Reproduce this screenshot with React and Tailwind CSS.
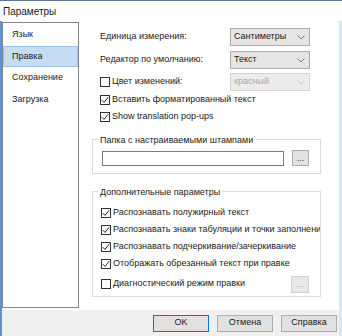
import React from "react";

const Check = ({ checked }) => (
  <span className="w-[10px] h-[10px] border border-[#333333] bg-white flex items-center justify-center shrink-0">
    {checked && (
      <svg width="8" height="8" viewBox="0 0 8 8">
        <path d="M0.8 4.2 L3 6.4 L7.2 1.2" fill="none" stroke="#222" strokeWidth="1" />
      </svg>
    )}
  </span>
);

const CheckRow = ({ checked, label, className = "h-[17px]" }) => (
  <div className={`flex items-center gap-[2px] whitespace-nowrap ${className}`}>
    <Check checked={checked} />
    <span>{label}</span>
  </div>
);

const Combo = ({ value, disabled }) => (
  <div
    className={`w-[80px] h-[18px] border flex items-center justify-between pl-[3px] pr-[4px] ${
      disabled ? "bg-[#ececec] border-[#d3d3d3] text-[#a8a8a8]" : "bg-[#e5e5e5] border-[#acacac]"
    }`}
  >
    <span>{value}</span>
    <svg width="8" height="5" viewBox="0 0 8 5">
      <path d="M0.5 0.5 L4 4 L7.5 0.5" fill="none" stroke={disabled ? "#c4c4c4" : "#7a7a7a"} strokeWidth="1" />
    </svg>
  </div>
);

const Group = ({ title, className, children }) => (
  <div className={`relative ml-[13px] w-[229px] border border-[#dcdcdc] ${className}`}>
    <span className="absolute left-[5px] top-0 -translate-y-1/2 bg-white px-[2px] leading-none whitespace-nowrap">{title}</span>
    <div className="w-full h-full overflow-hidden">{children}</div>
  </div>
);

export default function App() {
  const pages = ["Язык", "Правка", "Сохранение", "Загрузка"];

  return (
    <div
      className="w-[342px] h-[336px] bg-white flex flex-col overflow-hidden border-t border-[#5a7896] text-[9px] text-[#1a1a1a]"
      style={{ fontFamily: '"Liberation Sans", Arial, sans-serif' }}
    >
      {/* Title */}
      <div className="h-[20px] pl-[3px] flex items-center text-[10px]">Параметры</div>

      <div className="flex-1 flex flex-col border-l-2 border-l-[#5f93c9] border-r-[3px] border-r-[#dbe7f3]">
        <div className="flex-1 flex">
          {/* Pages list */}
          <div className="mt-[1px] w-[77px] h-[286px] border border-[#828790] bg-white pt-[1px]">
            {pages.map((p) => (
              <div
                key={p}
                className={`h-[21.5px] flex items-center pl-[8px] ${
                  p === "Правка" ? "bg-[#c6dcf1] border border-[#9cc3e8]" : "border border-transparent"
                }`}
              >
                {p}
              </div>
            ))}
          </div>

          {/* Settings */}
          <div className="flex-1 flex flex-col pt-[7px]">
            <div className="pl-[21px] pr-[29px] flex flex-col">
              <div className="flex items-center justify-between">
                <span>Единица измерения:</span>
                <Combo value="Сантиметры" />
              </div>
              <div className="mt-[5px] flex items-center justify-between">
                <span>Редактор по умолчанию:</span>
                <Combo value="Текст" />
              </div>
              <div className="mt-[4px] flex items-center justify-between">
                <div className="flex items-center gap-[2px]">
                  <Check checked={false} />
                  <span>Цвет изменений:</span>
                </div>
                <Combo value="красный" disabled />
              </div>
              <CheckRow checked label="Вставить форматированный текст" />
              <CheckRow checked label="Show translation pop-ups" />
            </div>

            <Group title="Папка с настраиваемыми штампами" className="mt-[14px] h-[35px]">
              <div className="flex items-center mt-[10px] ml-[9px] gap-[8px]">
                <div className="w-[182px] h-[15px] border border-[#7a7a7a] bg-white" />
                <div className="w-[17px] h-[16px] border border-[#adadad] bg-[#e1e1e1] flex items-center justify-center text-[#333] leading-none">
                  ...
                </div>
              </div>
            </Group>

            <Group title="Дополнительные параметры" className="mt-[17px] h-[106px]">
              <div className="pt-[12px] pl-[8px] pr-[11px] flex flex-col">
                <CheckRow checked label="Распознавать полужирный текст" />
                <CheckRow checked label="Распознавать знаки табуляции и точки заполнения" />
                <CheckRow checked label="Распознавать подчеркивание/зачеркивание" />
                <CheckRow checked label="Отображать обрезанный текст при правке" />
                <div className="mt-[3px] h-[18px] flex items-center justify-between">
                  <div className="flex items-center gap-[2px]">
                    <Check checked={false} />
                    <span>Диагностический режим правки</span>
                  </div>
                  <div className="w-[18px] h-[17px] border border-[#d0d0d0] bg-[#e8e8e8] flex items-center justify-center text-[#a6a6a6] leading-none">
                    ...
                  </div>
                </div>
              </div>
            </Group>
          </div>
        </div>

        {/* Buttons */}
        <div className="h-[26px] bg-[#f0f0f0] flex items-center justify-end gap-[8px] pr-[2px]">
          <div className="w-[56px] h-[17px] border border-[#0078d7] bg-[#e1e1e1] flex items-center justify-center">OK</div>
          <div className="w-[56px] h-[17px] border border-[#adadad] bg-[#e1e1e1] flex items-center justify-center">Отмена</div>
          <div className="w-[56px] h-[17px] border border-[#adadad] bg-[#e1e1e1] flex items-center justify-center">Справка</div>
        </div>
      </div>
    </div>
  );
}
